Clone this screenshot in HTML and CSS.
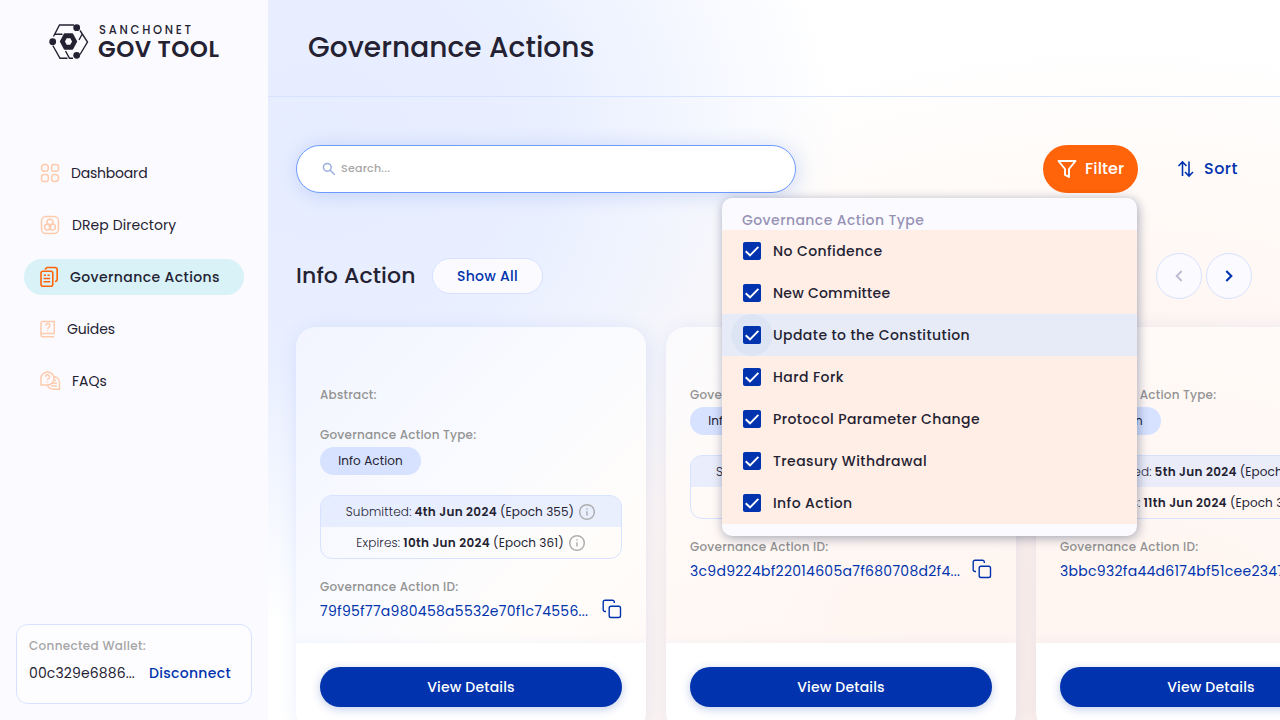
FILE: index.html
```html
<!DOCTYPE html>
<html lang="en">
<head>
<meta charset="utf-8">
<title>Governance Actions</title>
<link rel="stylesheet" href="styles.css">
</head>
<body>
<svg class="defs" width="0" height="0">
  <symbol id="info" viewBox="0 0 18 18"><circle cx="9" cy="9" r="7.300" fill="none" stroke="#adaeb0" stroke-width="1.500"/><path d="M9 8.300v4.300M9 5.200v1.400" fill="none" stroke="#adaeb0" stroke-width="1.500"/></symbol>
  <symbol id="copy" viewBox="0 0 20 20"><rect x="7.200" y="7.200" width="11.300" height="11.300" rx="1.800" fill="none" stroke="#0033ad" stroke-width="1.400"/><path d="M4 12.500H3A1.800 1.800 0 0 1 1.200 10.700V3A1.800 1.800 0 0 1 3 1.200H10.500A1.800 1.800 0 0 1 12.300 3V4" fill="none" stroke="#0033ad" stroke-width="1.400"/></symbol>
  <symbol id="check" viewBox="0 0 18 18"><rect width="18" height="18" rx="2" fill="#0033ad"/><path d="M2.700 9.200L7 13.300L15.400 4.800" fill="none" stroke="#fff" stroke-width="1.900"/></symbol>
</svg>
<div class="app">
  <aside class="sidebar">
    <div class="logo">
      <svg width="40" height="36" viewBox="0 0 40 36" fill="none" stroke="#242232" stroke-width="1.400">
        <path d="M25 1H10.500L4.500 12.500M6 10.300H13.500M31 6.500L38.500 18L31 30.500M33.500 9.500L30 16M3.800 21.500L11 34.300H18.500M24 34.300H20.500L16.500 27"/>
        <path fill="#242232" fill-rule="evenodd" stroke-linejoin="round" d="M11.500 17.500L15.500 10H23.500L27.500 17.500L23.500 25H15.500ZM15.200 17.500L17.400 21.500H21.600L23.800 17.500L21.600 13.500H17.400Z"/>
        <g fill="#242232" stroke="none"><circle cx="27.700" cy="3.700" r="3.400"/><circle cx="3.700" cy="17.700" r="3.400"/><circle cx="27.700" cy="31.300" r="3.400"/></g>
      </svg>
      <div class="brand"><span class="brand-net">SANCHONET</span><span class="brand-name">GOV TOOL</span></div>
    </div>
    <nav class="nav">
      <a class="nav-item"><svg width="20" height="20" viewBox="0 0 20 20"><rect x="1.500" y="1.500" width="6.800" height="6.800" rx="3"/><rect x="11.500" y="1.500" width="7" height="6.800" rx="2.300"/><rect x="1.500" y="11.500" width="6.800" height="7" rx="2.300"/><rect x="11.500" y="11.500" width="7" height="7" rx="3.200"/></svg><span class="t-dash">Dashboard</span></a>
      <a class="nav-item n2"><svg width="20" height="20" viewBox="0 0 20 20"><rect x="1.500" y="1.500" width="17" height="17" rx="4.500"/><circle cx="10" cy="7.300" r="3"/><circle cx="7.600" cy="12" r="3"/><circle cx="12.400" cy="12" r="3"/></svg><span class="t-drep">DRep Directory</span></a>
      <a class="nav-item active"><svg width="20" height="22" viewBox="0 0 20 22"><path d="M5.500 3.700A2.200 2.200 0 0 1 7.700 1.500H15A2.200 2.200 0 0 1 17.200 3.700V13A2.500 2.500 0 0 1 15 15.500"/><rect x="1" y="5.300" width="11.800" height="15" rx="2"/><path d="M3.800 9.200H6M7.500 9.200H9.700M3.500 12.500H10.200M3.500 15.700H10.200"/></svg><span class="t-gov">Governance Actions</span></a>
      <a class="nav-item n4"><svg width="16" height="18" viewBox="0 0 16 18"><path d="M14.300 13.500V1.500H2.500A1.500 1.500 0 0 0 1 3V15.200A1.500 1.500 0 0 0 2.500 16.700H14.300M1 15A1.500 1.500 0 0 1 2.500 13.500H14.300M5.800 5.700A2 2 0 1 1 8.700 7.300Q7.700 7.900 7.700 9M7.700 10.300V11.500"/></svg><span class="t-guides">Guides</span></a>
      <a class="nav-item n5"><svg width="21" height="20" viewBox="0 0 21 20"><path d="M1 14V7.500A6.500 6.500 0 1 1 7.500 14ZM5.600 6A2 2 0 1 1 8.500 7.500Q7.500 8 7.500 9M7.500 10.300V11.500M14 5.500A6.500 6.500 0 0 1 19.500 12V18.200H13A6.500 6.500 0 0 1 7.500 14.500M13.500 9.500H16M12.500 12.300H17M11 15H17"/></svg><span class="t-faq">FAQs</span></a>
    </nav>
    <div class="wallet">
      <div class="wallet-label">Connected Wallet:</div>
      <div class="wallet-row"><span class="addr">00c329e6886...</span><a class="disconnect">Disconnect</a></div>
    </div>
  </aside>
  <main class="main">
    <header class="header"><h1>Governance Actions</h1></header>
    <div class="toolbar">
      <div class="search"><svg width="14" height="14" viewBox="0 0 14 14" fill="none" stroke="#99adde" stroke-width="1.500"><circle cx="5.300" cy="5.300" r="3.900"/><path d="M8.200 8.200L12.700 12.700"/></svg><span>Search...</span></div>
      <div class="actions">
        <div class="filter"><svg width="20" height="20" viewBox="0 0 20 20" fill="none" stroke="#fff" stroke-width="1.900" stroke-linejoin="round"><path d="M1.500 2H18.500L12 10V18L8 15.800V10Z"/></svg><span>Filter</span></div>
        <div class="sort"><svg width="18" height="18" viewBox="0 0 18 18" fill="none" stroke="#0033ad" stroke-width="1.600"><path d="M5.500 16V2M1.500 6L5.500 2L9.500 6M12 1.500V16M8 12L12 16L16 12"/></svg><span>Sort</span></div>
      </div>
    </div>
    <div class="section">
      <h2>Info Action</h2><div class="show">Show All</div>
      <div class="arrows"><div class="arrow"><svg width="8" height="12" viewBox="0 0 8 12" fill="none" stroke="#bfbad0" stroke-width="1.900"><path d="M6.700 1L1.700 6L6.700 11"/></svg></div><div class="arrow"><svg width="8" height="12" viewBox="0 0 8 12" fill="none" stroke="#0033ad" stroke-width="2.100"><path d="M1.300 1L6.300 6L1.300 11"/></svg></div></div>
    </div>
    <div class="cards">
      <article class="card">
        <div class="card-body">
          <div class="label abstract">Abstract:</div>
          <div class="label">Governance Action Type:</div><div class="pill">Info Action</div>
          <div class="dates"><div class="date sub"><i>Submitted:</i><b>4th Jun 2024</b><span>(Epoch 355)</span><svg width="18" height="18"><use href="#info"/></svg></div><div class="date exp"><i>Expires:</i><b>10th Jun 2024</b><span>(Epoch 361)</span><svg width="18" height="18"><use href="#info"/></svg></div></div>
          <div class="label id">Governance Action ID:</div><div class="hash"><span>79f95f77a980458a5532e70f1c74556...</span><svg width="20" height="20"><use href="#copy"/></svg></div>
        </div>
        <div class="card-foot"><div class="view">View Details</div></div>
      </article>
      <article class="card">
        <div class="card-body">
          <div class="label">Governance Action Type:</div><div class="pill">Info Action</div>
          <div class="dates"><div class="date sub"><i>Submitted:</i><b>5th Jun 2024</b><span>(Epoch 356)</span><svg width="18" height="18"><use href="#info"/></svg></div><div class="date exp"><i>Expires:</i><b>11th Jun 2024</b><span>(Epoch 362)</span><svg width="18" height="18"><use href="#info"/></svg></div></div>
          <div class="label id">Governance Action ID:</div><div class="hash"><span>3c9d9224bf22014605a7f680708d2f4...</span><svg width="20" height="20"><use href="#copy"/></svg></div>
        </div>
        <div class="card-foot"><div class="view">View Details</div></div>
      </article>
      <article class="card">
        <div class="card-body">
          <div class="label">Governance Action Type:</div><div class="pill">Info Action</div>
          <div class="dates"><div class="date sub"><i>Submitted:</i><b>5th Jun 2024</b><span>(Epoch 356)</span><svg width="18" height="18"><use href="#info"/></svg></div><div class="date exp"><i>Expires:</i><b>11th Jun 2024</b><span>(Epoch 362)</span><svg width="18" height="18"><use href="#info"/></svg></div></div>
          <div class="label id">Governance Action ID:</div><div class="hash"><span>3bbc932fa44d6174bf51cee2347...</span><svg width="20" height="20"><use href="#copy"/></svg></div>
        </div>
        <div class="card-foot"><div class="view">View Details</div></div>
      </article>
    </div>
  </main>
  <div class="menu">
    <div class="menu-title">Governance Action Type</div>
    <div class="opt"><svg width="18" height="18"><use href="#check"/></svg><span>No Confidence</span></div>
    <div class="opt tight"><svg width="18" height="18"><use href="#check"/></svg><span>New Committee</span></div>
    <div class="opt hover"><svg width="18" height="18"><use href="#check"/></svg><span>Update to the Constitution</span></div>
    <div class="opt"><svg width="18" height="18"><use href="#check"/></svg><span>Hard Fork</span></div>
    <div class="opt"><svg width="18" height="18"><use href="#check"/></svg><span>Protocol Parameter Change</span></div>
    <div class="opt"><svg width="18" height="18"><use href="#check"/></svg><span>Treasury Withdrawal</span></div>
    <div class="opt"><svg width="18" height="18"><use href="#check"/></svg><span>Info Action</span></div>
  </div>
</div>
</body>
</html>
```
FILE: styles.css
```css
*{box-sizing:border-box}
body{margin:0;font-family:Poppins,Inter,"Open Sans",sans-serif;color:#242232;font-size:14px;white-space:nowrap}
.defs{position:absolute}
svg{flex:none;display:block}
.app{position:relative;display:flex;width:1280px;height:720px;overflow:hidden;background:#fff}
.sidebar{width:268px;flex:none;background:#fbfbff;display:flex;flex-direction:column}
.logo{display:flex;height:155px;padding:24px 0 0 49px;gap:9px}
.brand{display:flex;flex-direction:column}
.brand-net{font-size:11.500px;line-height:12px;font-weight:500;letter-spacing:2.750px;padding-left:1px}
.brand-name{font-size:23px;line-height:26px;font-weight:600;letter-spacing:.5px}
.nav{display:flex;flex-direction:column;gap:16px;padding:0 24px}
.nav-item{height:36px;display:flex;align-items:center;gap:11px;padding-left:16px;border-radius:18px}
.nav-item svg{fill:none;stroke:#ffcbad;stroke-width:1.500}
.nav-item.n2{gap:12px}
.t-dash{letter-spacing:-.2px}
.t-drep{letter-spacing:.08px}
.t-guides{letter-spacing:-.15px}
.nav-item.active{background:#d8f2f7;gap:10px;font-weight:500;letter-spacing:.4px}
.nav-item.active svg{stroke:#ff640a;stroke-width:1.600}
.wallet{margin:auto 16px 16px;height:80px;border:1px solid #d6e2ff;border-radius:12px;background:#fdfdff;padding:12px 12px 0}
.wallet-label{font-size:12px;line-height:18px;font-weight:500;color:#a6a6a6;letter-spacing:.32px}
.wallet-row{display:flex;align-items:center;justify-content:space-between;padding-right:8px;margin-top:6px;line-height:22px}
.addr{letter-spacing:.12px}
.disconnect{font-weight:500;color:#0033ad;letter-spacing:.32px;padding-top:1px}
.main{flex:1;min-width:0;background:radial-gradient(ellipse 520px 480px at 50px 150px,#e6edff 0,#e9efff 45%,rgba(240,244,255,0) 100%),radial-gradient(ellipse 820px 620px at 850px 660px,#fff0e9 0,#fff2ec 35%,rgba(255,250,247,0) 100%),#fff}
.header{height:97px;border-bottom:1px solid #d6e2ff;padding:26px 40px 0}
h1{margin:0;font-size:28px;line-height:44px;font-weight:500;letter-spacing:.06px}
.toolbar{margin:48px 28px 0;height:48px;display:flex;justify-content:space-between}
.search{width:500px;border:1px solid #6e9bff;border-radius:24px;background:#fff;box-shadow:2px 2px 20px rgba(47,98,220,.2);display:flex;align-items:center;padding-left:25px;gap:5px;font-size:11px;font-weight:500;color:#a6a6a6;letter-spacing:.25px}
.search span{padding-bottom:2px}
.actions{display:flex}
.filter{width:95px;height:48px;border-radius:24px;background:#ff640a;color:#fff;display:flex;align-items:center;padding-left:14px;gap:8px;font-size:16px;font-weight:500;letter-spacing:.1px}
.sort{width:114px;display:flex;align-items:center;padding-left:39px;gap:9px;font-size:16px;font-weight:500;color:#0033ad;letter-spacing:.5px}
.filter span,.sort span{padding-bottom:1px}
.section{height:46px;margin:60px 28px 28px;display:flex;align-items:center}
h2{margin:0;width:136px;font-size:22px;font-weight:500;letter-spacing:.15px;padding-bottom:2px}
.show{width:111px;height:36px;border:1px solid #d6e2ff;border-radius:18px;background:#fbfbff;color:#0033ad;font-weight:500;display:flex;align-items:center;justify-content:center;letter-spacing:.25px}
.arrows{display:flex;gap:4px;margin-left:auto}
.arrow{width:46px;height:46px;border:1px solid #d6e2ff;border-radius:50%;background:#fbfbff;display:flex;align-items:center;justify-content:center}
.cards{display:flex;gap:20px;padding-left:28px}
.card{width:350px;flex:none;height:405px;border-radius:20px;overflow:hidden;background:linear-gradient(rgba(255,255,255,.5),rgba(255,255,255,.25));box-shadow:2px 3px 20px rgba(47,98,220,.13);display:flex;flex-direction:column}
.card:first-child{background:linear-gradient(135deg,#f2f5ff 0,#fafbff 45%,#fffdfb 65%,#fff9f6 100%)}
.card-body{height:316px;padding:59px 24px 0}
.label{font-size:12px;line-height:18px;font-weight:500;color:#939393;letter-spacing:.22px}
.abstract{margin-bottom:22px}
.pill{width:101px;height:28px;margin-top:3px;border-radius:14px;background:#d6e2ff;font-size:12px;display:flex;align-items:center;justify-content:center;letter-spacing:.1px}
.dates{margin:20px 0 19px;height:64px;border:1px solid #d6e2ff;border-radius:12px;overflow:hidden}
.date{height:31px;display:flex;align-items:center;justify-content:center;gap:3px;font-size:12px;letter-spacing:.1px}
.date i{font-style:normal;font-weight:300;letter-spacing:.18px}
.date b{font-weight:600;letter-spacing:.33px}
.date svg{margin-left:1px}
.sub{background:rgba(214,226,255,.5)}
.hash{height:26px;display:flex;justify-content:space-between;align-items:center;color:#0033ad;margin-top:2px;letter-spacing:.28px}
.hash svg{margin-bottom:4px}
.card-foot{flex:1;background:#fff;padding:24px;box-shadow:0 0 12px rgba(47,98,220,.06)}
.view{height:40px;border-radius:20px;background:#0033ad;color:#fff;font-weight:500;display:flex;align-items:center;justify-content:center;box-shadow:0 2px 10px rgba(0,51,173,.25);letter-spacing:.18px}
.menu{position:absolute;left:722px;top:198px;width:415px;height:338px;border-radius:10px;overflow:hidden;background:#fbfbff;box-shadow:1px 2px 11px rgba(0,18,61,.37)}
.menu-title{height:32px;padding:11px 20px 0;line-height:22px;font-weight:500;color:#9792b5;letter-spacing:.42px}
.opt{height:42px;background:#ffeee6;display:flex;align-items:center;padding-left:21px;gap:12px;font-weight:500;letter-spacing:.41px}
.tight{letter-spacing:.24px}
.opt.hover{background:radial-gradient(circle at 30px 21px,#dde5f4 20.500px,#e6ebf7 21px)}
```
